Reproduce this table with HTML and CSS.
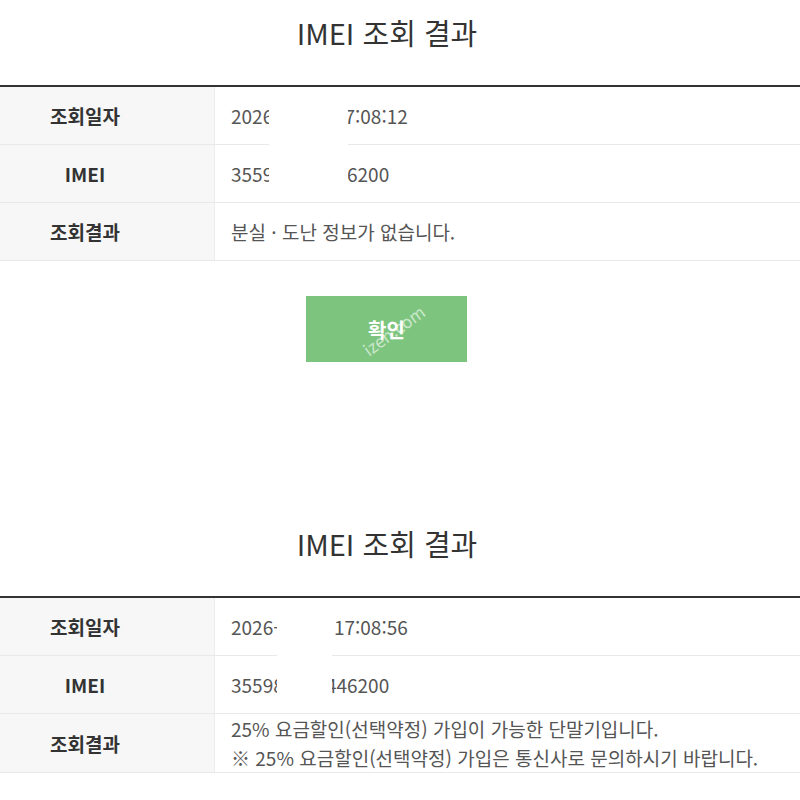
FILE: index.html
```html
<!DOCTYPE html>
<html lang="ko">
<head>
  <meta charset="UTF-8" />
  <title>IMEI 조회 결과</title>
  <link rel="stylesheet" href="styles.css">
</head>
<body>
  <!-- 첫 번째 조회 -->
  <section class="result">
    <h2 class="result-title">IMEI 조회 결과</h2>
    <div class="table-wrap">
      <table class="result-table">
        <tr>
          <th>조회일자</th>
          <td>2026-01-29 17:08:12</td>
        </tr>
        <tr>
          <th>IMEI</th>
          <td>355986123446200</td>
        </tr>
        <tr>
          <th>조회결과</th>
          <td>분실 · 도난 정보가 없습니다.</td>
        </tr>
      </table>
      <div class="mask mask-first"></div>
    </div>
    <div class="btn-row">
      <button class="btn-confirm">확인<span class="watermark">izen.com</span></button>
    </div>
  </section>

  <!-- 두 번째 조회 -->
  <section class="result result-second">
    <h2 class="result-title">IMEI 조회 결과</h2>
    <div class="table-wrap">
      <table class="result-table">
        <tr>
          <th>조회일자</th>
          <td>2026-01-29 17:08:56</td>
        </tr>
        <tr>
          <th>IMEI</th>
          <td>355986123446200</td>
        </tr>
        <tr>
          <th>조회결과</th>
          <td class="multi">
            25% 요금할인(선택약정) 가입이 가능한 단말기입니다.<br>
            ※ 25% 요금할인(선택약정) 가입은 통신사로 문의하시기 바랍니다.
          </td>
        </tr>
      </table>
      <div class="mask mask-second"></div>
    </div>
  </section>
</body>
</html>
```

FILE: styles.css
```css
/* Basic resets */
html, body {
  margin: 0;
  padding: 0;
  background: #fff;
  color: #333;
  font-family: "Noto Sans CJK KR", "Noto Sans", sans-serif;
}

/* Section title */
.result-title {
  margin: 0;
  padding: 12px 26px 33px 0;
  line-height: 40px;
  font-size: 29px;
  font-weight: 400;
  text-align: center;
  color: #333;
}
.result-second {
  margin-top: 149px;
}

/* Result table */
.table-wrap {
  position: relative;
}
.result-table {
  width: 100%;
  border-collapse: collapse;
  border-top: 2px solid #333;
}
.result-table th,
.result-table td {
  height: 57px;
  padding: 0;
  border-bottom: 1px solid #e9e9e9;
  font-size: 19px;
  vertical-align: middle;
}
.result-table th {
  width: 170px;
  padding-right: 44px;
  background: #f7f7f7;
  border-right: 1px solid #ececec;
  font-weight: 700;
  color: #333;
  text-align: center;
}
.result-table td {
  padding-left: 16px;
  color: #555;
  text-align: left;
}
.result-table td.multi {
  line-height: 29px;
}

/* White boxes hiding part of the numbers */
.mask {
  position: absolute;
  background: #fff;
}
.mask-first {
  left: 269px;
  width: 79px;
  top: 7px;
  height: 106px;
}
.mask-second {
  left: 277px;
  width: 55px;
  top: 7px;
  height: 106px;
}

/* Confirm button */
.btn-row {
  display: flex;
  justify-content: center;
  padding: 35px 27px 0 0;
}
.btn-confirm {
  position: relative;
  width: 161px;
  height: 66px;
  border: none;
  background: #7dc57f;
  color: #fff;
  font-family: inherit;
  font-size: 20px;
  font-weight: 700;
  cursor: pointer;
}
.watermark {
  position: absolute;
  left: 66px;
  top: 40px;
  font-size: 17px;
  font-weight: 400;
  color: rgba(255, 255, 255, 0.6);
  transform: rotate(-36deg);
  transform-origin: left bottom;
  white-space: nowrap;
}
```
